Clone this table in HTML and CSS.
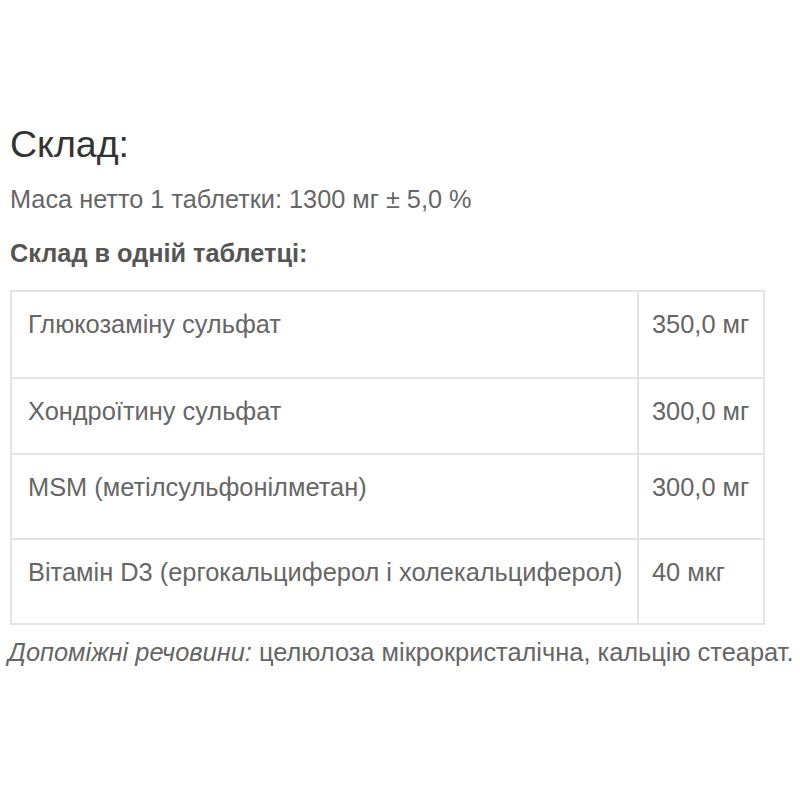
FILE: index.html
```html
<!DOCTYPE html>
<html lang="uk">
<head>
<meta charset="utf-8">
<title>Склад</title>
<link rel="stylesheet" href="styles.css">
</head>
<body>
<main class="composition">
  <h2 class="title">Склад:</h2>
  <p class="net">Маса нетто 1 таблетки: 1300 мг ± 5,0 %</p>
  <p class="subhead">Склад в одній таблетці:</p>
  <table class="ingredients">
    <tr class="row row-1">
      <td class="name">Глюкозаміну сульфат</td>
      <td class="amount">350,0 мг</td>
    </tr>
    <tr class="row row-2">
      <td class="name">Хондроїтину сульфат</td>
      <td class="amount">300,0 мг</td>
    </tr>
    <tr class="row row-3">
      <td class="name">MSM (метілсульфонілметан)</td>
      <td class="amount">300,0 мг</td>
    </tr>
    <tr class="row row-4">
      <td class="name">Вітамін D3 (ергокальциферол і холекальциферол)</td>
      <td class="amount">40 мкг</td>
    </tr>
  </table>
  <p class="excipients"><em>Допоміжні речовини:</em> целюлоза мікрокристалічна, кальцію стеарат.</p>
</main>
</body>
</html>
```

FILE: styles.css
```css
html, body {
  margin: 0;
  padding: 0;
  background: #ffffff;
}

body {
  font-family: "Liberation Sans", Arial, sans-serif;
  color: #666666;
}

.composition {
  padding: 0 0 0 10px;
}

.title {
  margin: 122px 0 0 0;
  font-size: 37.5px;
  line-height: 44px;
  font-weight: normal;
  color: #333333;
}

.net {
  margin: 18px 0 0 0;
  font-size: 25.3px;
  line-height: 30px;
  color: #666666;
}

.subhead {
  margin: 24px 0 0 0;
  font-size: 25.3px;
  line-height: 30px;
  font-weight: bold;
  color: #555555;
}

.ingredients {
  margin-top: 22px;
  width: 755px;
  border-collapse: collapse;
  border: 2px solid #e4e4e4;
}

.ingredients td {
  border: 2px solid #e4e4e4;
  vertical-align: top;
  font-size: 25.4px;
  line-height: 30px;
  color: #666666;
  padding: 17px 8px 0 16px;
  box-sizing: border-box;
  white-space: nowrap;
}

.ingredients .name {
  width: 627px;
}

.ingredients .amount {
  padding-left: 13px;
}

.row-1 td { height: 87px; }
.row-2 td { height: 76px; }
.row-3 td { height: 85px; }
.row-4 td { height: 85px; }

.excipients {
  margin: 12px 0 0 -2px;
  font-size: 25.4px;
  line-height: 30px;
  color: #666666;
  white-space: nowrap;
}

.excipients em {
  font-style: italic;
}
```
